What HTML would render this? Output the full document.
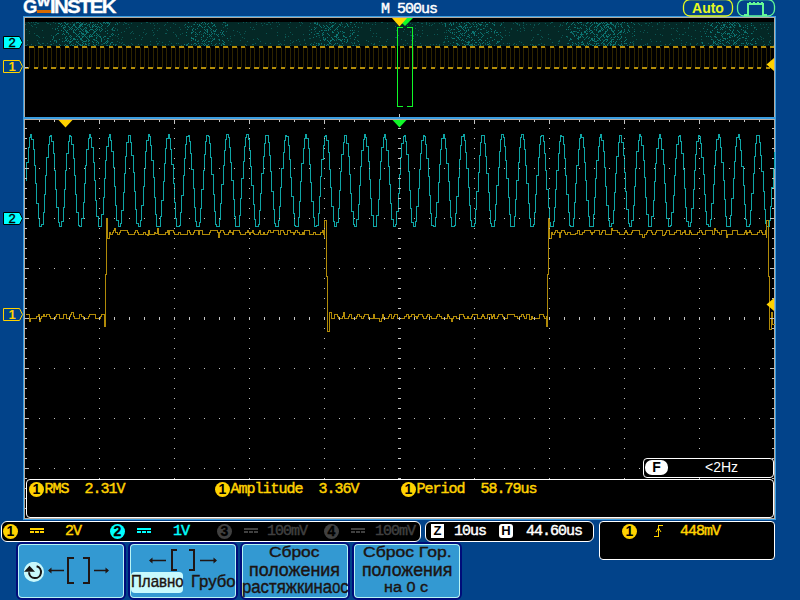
<!DOCTYPE html><html lang="ru"><head><meta charset="utf-8"><title>GW Instek oscilloscope</title><style>
*{margin:0;padding:0;box-sizing:border-box}
html,body{width:800px;height:600px;overflow:hidden;background:#02438a}
body{position:relative;font-family:"Liberation Sans",sans-serif}
.scope{position:absolute;left:0;top:0}
.a{position:absolute;white-space:nowrap}
.m{font-family:"Liberation Mono",monospace;font-weight:normal;-webkit-text-stroke:0.45px;font-size:15px;letter-spacing:-1px;line-height:14px;height:14px;margin-top:2px}
.logo{left:0;top:-3px;height:20px;line-height:20px;font-size:18.5px;font-weight:bold;color:#fff;width:130px;-webkit-text-stroke:0.3px #fff}
.logo span{position:absolute;top:0}
.logo .g{left:23px}
.logo .w{left:36.5px;font-size:12.5px;top:-5px;transform:scaleX(1.12);transform-origin:0 0;-webkit-text-stroke:0.4px #fff}
.logo .r{left:49.5px;letter-spacing:-1.55px;transform:scaleX(1.105);transform-origin:0 0}
.logo .bar{left:37px;top:13px;width:14px;height:3px;background:#d86a00}
.pill{top:0;height:17px;border-radius:9px;border:1px solid}
.tagn{width:16px;text-align:center;font-weight:bold;font-size:13px;line-height:13px;height:13px}
.m2{margin-top:1px;margin-left:-1px}
.thin{font-weight:normal;-webkit-text-stroke:0.35px}
.circ{width:15px;height:15px;border-radius:50%;text-align:center;font-weight:bold;font-size:14px;line-height:15px;color:#000}
.box{border:1px solid #fff;background:#000}
.btn{top:542px;height:58px;border:2px solid #000c7a;border-radius:6px;background:#b8f4f4;padding:1px}
.btn>i{display:block;width:100%;height:100%;background:#3399d2;border-radius:3px}
.bt2{color:#1c1412;transform-origin:0 0;-webkit-text-stroke:0.4px #1c1412}
</style></head><body>
<svg class="scope" width="800" height="600" viewBox="0 0 800 600" shape-rendering="crispEdges">
<rect x="23" y="16" width="753" height="504" fill="#3a9de0"/>
<rect x="24" y="17" width="751" height="502" fill="#b4aca4"/>
<rect x="25" y="18" width="749" height="500" fill="#000"/>
<rect x="23" y="117" width="753" height="2" fill="#3a9de0"/>
<rect x="24" y="119" width="751" height="1" fill="#b4aca4"/>
<rect x="25" y="22" width="749" height="24" fill="#042826"/>
<path d="M28 22h1M31 22h1M33 22h1M35 22h1M36 22h1M46 22h1M53 22h1M65 22h1M72 22h1M83 22h1M93 22h1M110 22h1M116 22h1M119 22h1M124 22h1M146 22h1M147 22h1M167 22h1M224 22h1M225 22h1M243 22h1M246 22h1M250 22h1M256 22h1M268 22h1M269 22h1M272 22h1M276 22h1M278 22h1M290 22h1M299 22h1M301 22h1M314 22h1M315 22h1M317 22h1M326 22h1M329 22h1M359 22h1M362 22h1M375 22h1M381 22h1M382 22h1M396 22h1M417 22h1M418 22h1M426 22h1M441 22h1M450 22h1M453 22h1M466 22h1M467 22h1M473 22h1M481 22h1M494 22h1M503 22h1M515 22h1M523 22h1M551 22h1M552 22h1M563 22h1M579 22h1M588 22h1M605 22h1M651 22h1M659 22h1M664 22h1M681 22h1M689 22h1M693 22h1M725 22h1M732 22h1M735 22h1M737 22h1M29 23h1M37 23h1M38 23h1M47 23h1M48 23h1M55 23h1M67 23h1M68 23h1M74 23h1M76 23h1M81 23h1M90 23h1M103 23h1M108 23h1M125 23h1M126 23h1M131 23h1M141 23h1M150 23h1M153 23h1M157 23h1M173 23h1M211 23h1M225 23h1M238 23h1M261 23h1M264 23h1M302 23h1M310 23h1M331 23h1M341 23h1M362 23h1M366 23h1M368 23h1M387 23h1M402 23h1M404 23h1M410 23h1M421 23h1M422 23h1M426 23h1M429 23h1M434 23h1M439 23h1M444 23h1M459 23h1M472 23h1M501 23h1M513 23h1M516 23h1M517 23h1M523 23h1M539 23h1M545 23h1M550 23h1M587 23h1M616 23h1M618 23h1M621 23h1M633 23h1M638 23h1M645 23h1M646 23h1M649 23h1M657 23h1M689 23h1M698 23h1M700 23h1M736 23h1M25 24h1M34 24h1M35 24h1M50 24h1M70 24h1M88 24h1M117 24h1M123 24h1M128 24h1M165 24h1M175 24h1M193 24h1M203 24h1M205 24h1M222 24h1M256 24h1M266 24h1M267 24h1M270 24h1M279 24h1M288 24h1M316 24h1M319 24h1M329 24h1M334 24h1M340 24h1M342 24h1M350 24h1M372 24h1M375 24h1M398 24h1M400 24h1M412 24h1M426 24h1M432 24h1M442 24h1M470 24h1M493 24h1M517 24h1M519 24h1M526 24h1M530 24h1M534 24h1M538 24h1M560 24h1M566 24h1M583 24h1M609 24h1M611 24h1M613 24h1M616 24h1M618 24h1M621 24h1M639 24h1M657 24h1M669 24h1M676 24h1M708 24h1M725 24h1M734 24h1M747 24h1M760 24h1M763 24h1M766 24h1M770 24h1M31 25h1M89 25h1M154 25h1M164 25h1M184 25h1M226 25h1M262 25h1M300 25h1M407 25h1M415 25h1M429 25h1M431 25h1M460 25h1M477 25h1M483 25h1M485 25h1M519 25h1M523 25h1M534 25h1M547 25h1M560 25h1M562 25h1M575 25h1M583 25h1M621 25h1M628 25h1M641 25h1M648 25h1M664 25h1M693 25h1M735 25h1M740 25h1M753 25h1M32 26h1M137 26h1M189 26h1M225 26h1M277 26h1M309 26h1M342 26h1M395 26h1M422 26h1M458 26h1M487 26h1M554 26h1M559 26h1M614 26h1M652 26h1M704 26h1M36 27h1M65 27h1M75 27h1M86 27h1M100 27h1M129 27h1M170 27h1M179 27h1M185 27h1M223 27h1M250 27h1M253 27h1M289 27h1M296 27h1M316 27h1M323 27h1M332 27h1M361 27h1M469 27h1M476 27h1M504 27h1M523 27h1M533 27h1M577 27h1M589 27h1M632 27h1M688 27h1M731 27h1M745 27h1M755 27h1M764 27h1M768 27h1M52 28h1M55 28h1M105 28h1M115 28h1M126 28h1M154 28h1M159 28h1M227 28h1M271 28h1M326 28h1M370 28h1M387 28h1M415 28h1M484 28h1M511 28h1M520 28h1M524 28h1M578 28h1M579 28h1M597 28h1M601 28h1M605 28h1M615 28h1M663 28h1M671 28h1M673 28h1M677 28h1M684 28h1M688 28h1M725 28h1M754 28h1M761 28h1M26 29h1M85 29h1M111 29h1M117 29h1M144 29h1M166 29h1M180 29h1M206 29h1M252 29h1M254 29h1M404 29h1M437 29h1M453 29h1M511 29h1M570 29h1M628 29h1M634 29h1M657 29h1M733 29h1M767 29h1M42 30h1M99 30h1M112 30h1M113 30h1M117 30h1M152 30h1M157 30h1M167 30h1M210 30h1M233 30h1M309 30h1M322 30h1M325 30h1M354 30h1M370 30h1M396 30h1M418 30h1M422 30h1M446 30h1M450 30h1M486 30h1M505 30h1M517 30h1M524 30h1M531 30h1M540 30h1M612 30h1M624 30h1M644 30h1M676 30h1M695 30h1M745 30h1M29 31h1M83 31h1M124 31h1M132 31h1M206 31h1M211 31h1M213 31h1M226 31h1M237 31h1M245 31h1M315 31h1M337 31h1M358 31h1M403 31h1M410 31h1M449 31h1M520 31h1M558 31h1M575 31h1M576 31h1M587 31h1M640 31h1M677 31h1M700 31h1M704 31h1M706 31h1M744 31h1M753 31h1M93 32h1M121 32h1M131 32h1M143 32h1M153 32h1M173 32h1M239 32h1M277 32h1M290 32h1M354 32h1M410 32h1M444 32h1M446 32h1M454 32h1M509 32h1M572 32h1M621 32h1M643 32h1M647 32h1M685 32h1M29 33h1M34 33h1M130 33h1M133 33h1M146 33h1M165 33h1M166 33h1M182 33h1M196 33h1M203 33h1M244 33h1M266 33h1M316 33h1M342 33h1M350 33h1M373 33h1M376 33h1M422 33h1M484 33h1M488 33h1M494 33h1M573 33h1M625 33h1M632 33h1M752 33h1M768 33h1M68 34h1M84 34h1M99 34h1M145 34h1M154 34h1M175 34h1M180 34h1M199 34h1M201 34h1M214 34h1M240 34h1M285 34h1M292 34h1M303 34h1M322 34h1M407 34h1M415 34h1M417 34h1M434 34h1M437 34h1M537 34h1M538 34h1M548 34h1M576 34h1M583 34h1M597 34h1M601 34h1M655 34h1M660 34h1M671 34h1M679 34h1M682 34h1M683 34h1M729 34h1M741 34h1M36 35h1M37 35h1M51 35h1M55 35h1M81 35h1M115 35h1M139 35h1M153 35h1M176 35h1M234 35h1M277 35h1M318 35h1M319 35h1M358 35h1M398 35h1M410 35h1M411 35h1M413 35h1M417 35h1M427 35h1M500 35h1M505 35h1M509 35h1M562 35h1M662 35h1M688 35h1M731 35h1M38 36h1M87 36h1M97 36h1M109 36h1M117 36h1M176 36h1M196 36h1M222 36h1M230 36h1M285 36h1M288 36h1M350 36h1M372 36h1M376 36h1M413 36h1M420 36h1M445 36h1M501 36h1M541 36h1M567 36h1M632 36h1M691 36h1M738 36h1M746 36h1M760 36h1M770 36h1M39 37h1M43 37h1M122 37h1M142 37h1M242 37h1M285 37h1M319 37h1M380 37h1M395 37h1M396 37h1M451 37h1M491 37h1M533 37h1M542 37h1M561 37h1M567 37h1M613 37h1M711 37h1M715 37h1M722 37h1M761 37h1M53 38h1M62 38h1M71 38h1M118 38h1M135 38h1M157 38h1M178 38h1M210 38h1M212 38h1M230 38h1M244 38h1M257 38h1M309 38h1M310 38h1M323 38h1M337 38h1M350 38h1M413 38h1M447 38h1M548 38h1M585 38h1M610 38h1M676 38h1M679 38h1M695 38h1M740 38h1M757 38h1M763 38h1M104 39h1M112 39h1M121 39h1M131 39h1M141 39h1M218 39h1M253 39h1M258 39h1M298 39h1M304 39h1M324 39h1M336 39h1M340 39h1M387 39h1M401 39h1M532 39h1M540 39h1M550 39h1M602 39h1M611 39h1M636 39h1M641 39h1M650 39h1M672 39h1M691 39h1M701 39h1M712 39h1M758 39h1M761 39h1M27 40h1M37 40h1M55 40h1M56 40h1M81 40h1M88 40h1M94 40h1M95 40h1M198 40h1M228 40h1M240 40h1M284 40h1M290 40h1M296 40h1M304 40h1M336 40h1M357 40h1M366 40h1M405 40h1M411 40h1M531 40h1M559 40h1M594 40h1M598 40h1M603 40h1M673 40h1M681 40h1M713 40h1M731 40h1M739 40h1M747 40h1M770 40h1M54 41h1M86 41h1M107 41h1M108 41h1M117 41h1M150 41h1M156 41h1M159 41h1M169 41h1M198 41h1M231 41h1M247 41h1M260 41h1M278 41h1M293 41h1M299 41h1M341 41h1M368 41h1M379 41h1M386 41h1M415 41h1M444 41h1M469 41h1M498 41h1M519 41h1M558 41h1M559 41h1M633 41h1M651 41h1M656 41h1M660 41h1M733 41h1M763 41h1M769 41h1M38 42h1M69 42h1M76 42h1M119 42h1M122 42h1M162 42h1M206 42h1M292 42h1M314 42h1M351 42h1M354 42h1M443 42h1M444 42h1M466 42h1M498 42h1M521 42h1M552 42h1M587 42h1M632 42h1M686 42h1M701 42h1M769 42h1M38 43h1M39 43h1M42 43h1M43 43h1M47 43h1M53 43h1M73 43h1M88 43h1M103 43h1M121 43h1M131 43h1M157 43h1M158 43h1M171 43h1M176 43h1M178 43h1M201 43h1M202 43h1M216 43h1M222 43h1M255 43h1M265 43h1M270 43h1M280 43h1M290 43h1M305 43h1M311 43h1M319 43h1M352 43h1M371 43h1M374 43h1M407 43h1M420 43h1M450 43h1M472 43h1M480 43h1M485 43h1M503 43h1M507 43h1M509 43h1M514 43h1M541 43h1M558 43h1M567 43h1M573 43h1M579 43h1M597 43h1M604 43h1M621 43h1M625 43h1M633 43h1M647 43h1M670 43h1M681 43h1M690 43h1M697 43h1M708 43h1M717 43h1M719 43h1M733 43h1M742 43h1M756 43h1M770 43h1M27 44h1M31 44h1M40 44h1M50 44h1M88 44h1M101 44h1M102 44h1M115 44h1M116 44h1M123 44h1M124 44h1M132 44h1M138 44h1M141 44h1M150 44h1M157 44h1M165 44h1M168 44h1M186 44h1M193 44h1M221 44h1M230 44h1M245 44h1M252 44h1M253 44h1M278 44h1M279 44h1M281 44h1M284 44h1M300 44h1M318 44h1M321 44h1M328 44h1M331 44h1M339 44h1M373 44h1M374 44h1M403 44h1M411 44h1M430 44h1M433 44h1M436 44h1M439 44h1M443 44h1M466 44h1M470 44h1M472 44h1M480 44h1M485 44h1M490 44h1M513 44h1M516 44h1M523 44h1M530 44h1M532 44h1M538 44h1M539 44h1M544 44h1M578 44h1M591 44h1M603 44h1M615 44h1M629 44h1M633 44h1M645 44h1M647 44h1M665 44h1M669 44h1M685 44h1M690 44h1M696 44h1M712 44h1M717 44h1M718 44h1M735 44h1M764 44h1M768 44h1M25 45h1M26 45h1M35 45h1M45 45h1M56 45h1M84 45h1M89 45h1M95 45h1M98 45h1M106 45h1M125 45h1M128 45h1M147 45h1M162 45h1M173 45h1M181 45h1M187 45h1M195 45h1M201 45h1M212 45h1M214 45h1M246 45h1M290 45h1M311 45h1M324 45h1M328 45h1M340 45h1M341 45h1M343 45h1M352 45h1M355 45h1M356 45h1M367 45h1M379 45h1M381 45h1M382 45h1M385 45h1M393 45h1M405 45h1M415 45h1M421 45h1M425 45h1M439 45h1M448 45h1M457 45h1M470 45h1M471 45h1M475 45h1M476 45h1M483 45h1M489 45h1M494 45h1M509 45h1M533 45h1M535 45h1M555 45h1M572 45h1M603 45h1M612 45h1M633 45h1M640 45h1M643 45h1M660 45h1M661 45h1M681 45h1M718 45h1M725 45h1M741 45h1M763 45h1M773 45h1" stroke="#0a5552" stroke-width="1" fill="none" transform="translate(0,0.5)"/>
<path d="M64 22h1M76 22h1M77 22h1M78 22h1M80 22h1M90 22h1M92 22h1M98 22h1M103 22h1M104 22h1M106 22h1M107 22h1M108 22h1M188 22h1M195 22h1M202 22h1M204 22h1M211 22h1M223 22h1M330 22h1M332 22h1M333 22h1M341 22h1M350 22h1M351 22h1M356 22h1M456 22h1M461 22h1M468 22h1M475 22h1M482 22h1M485 22h1M489 22h1M567 22h1M573 22h1M577 22h1M580 22h1M581 22h1M587 22h1M591 22h1M594 22h1M596 22h1M601 22h1M603 22h1M606 22h1M610 22h1M611 22h1M617 22h1M622 22h1M624 22h1M631 22h1M708 22h1M716 22h1M718 22h1M722 22h1M727 22h1M729 22h1M734 22h1M58 23h1M59 23h1M61 23h1M65 23h1M79 23h1M82 23h1M86 23h1M100 23h1M105 23h1M107 23h1M109 23h1M117 23h1M201 23h1M205 23h1M208 23h1M212 23h1M314 23h1M315 23h1M317 23h1M335 23h1M346 23h1M445 23h1M450 23h1M453 23h1M464 23h1M469 23h1M478 23h1M492 23h1M566 23h1M572 23h1M578 23h1M586 23h1M590 23h1M594 23h1M596 23h1M597 23h1M599 23h1M600 23h1M602 23h1M604 23h1M607 23h1M610 23h1M611 23h1M627 23h1M705 23h1M712 23h1M719 23h1M730 23h1M733 23h1M738 23h1M751 23h1M60 24h1M66 24h1M67 24h1M73 24h1M74 24h1M80 24h1M81 24h1M82 24h1M84 24h1M85 24h1M89 24h1M93 24h1M95 24h1M97 24h1M101 24h1M109 24h1M115 24h1M185 24h1M194 24h1M197 24h1M199 24h1M207 24h1M214 24h1M227 24h1M317 24h1M339 24h1M347 24h1M354 24h1M445 24h1M449 24h1M451 24h1M453 24h1M459 24h1M466 24h1M473 24h1M476 24h1M479 24h1M480 24h1M481 24h1M486 24h1M487 24h1M494 24h1M501 24h1M571 24h1M574 24h1M581 24h1M592 24h1M598 24h1M599 24h1M606 24h1M607 24h1M608 24h1M612 24h1M620 24h1M634 24h1M711 24h1M723 24h1M724 24h1M729 24h1M731 24h1M732 24h1M739 24h1M62 25h1M64 25h1M73 25h1M74 25h1M79 25h1M80 25h1M81 25h1M87 25h1M92 25h1M94 25h1M102 25h1M108 25h1M199 25h1M200 25h1M213 25h1M214 25h1M225 25h1M227 25h1M319 25h1M323 25h1M326 25h1M332 25h1M333 25h1M340 25h1M347 25h1M445 25h1M451 25h1M465 25h1M466 25h1M480 25h1M494 25h1M500 25h1M585 25h1M591 25h1M597 25h1M598 25h1M603 25h1M605 25h1M606 25h1M613 25h1M615 25h1M627 25h1M710 25h1M711 25h1M717 25h1M721 25h1M723 25h1M724 25h1M732 25h1M734 25h1M739 25h1M745 25h1M751 25h1M58 26h1M61 26h1M65 26h1M68 26h1M72 26h1M75 26h1M79 26h1M80 26h1M82 26h1M89 26h1M92 26h1M93 26h1M95 26h1M96 26h1M98 26h1M101 26h1M107 26h1M187 26h1M191 26h1M198 26h1M201 26h1M205 26h1M208 26h1M212 26h1M215 26h1M320 26h1M324 26h1M327 26h1M331 26h1M332 26h1M338 26h1M345 26h1M348 26h1M355 26h1M445 26h1M459 26h1M460 26h1M461 26h1M464 26h1M471 26h1M474 26h1M476 26h1M485 26h1M569 26h1M586 26h1M590 26h1M595 26h1M597 26h1M600 26h1M604 26h1M607 26h1M608 26h1M615 26h1M618 26h1M621 26h1M628 26h1M712 26h1M716 26h1M724 26h1M726 26h1M730 26h1M733 26h1M739 26h1M740 26h1M747 26h1M63 27h1M64 27h1M69 27h1M71 27h1M76 27h1M78 27h1M79 27h1M85 27h1M90 27h1M92 27h1M97 27h1M99 27h1M113 27h1M188 27h1M202 27h1M204 27h1M209 27h1M314 27h1M321 27h1M328 27h1M330 27h1M337 27h1M344 27h1M352 27h1M358 27h1M456 27h1M461 27h1M463 27h1M465 27h1M467 27h1M470 27h1M568 27h1M574 27h1M575 27h1M580 27h1M594 27h1M596 27h1M601 27h1M604 27h1M606 27h1M608 27h1M610 27h1M615 27h1M622 27h1M629 27h1M715 27h1M716 27h1M720 27h1M722 27h1M723 27h1M727 27h1M729 27h1M730 27h1M734 27h1M743 27h1M754 27h1M57 28h1M63 28h1M70 28h1M72 28h1M77 28h1M80 28h1M84 28h1M86 28h1M96 28h1M101 28h1M112 28h1M193 28h1M197 28h1M210 28h1M315 28h1M325 28h1M329 28h1M336 28h1M449 28h1M457 28h1M462 28h1M465 28h1M478 28h1M483 28h1M490 28h1M577 28h1M581 28h1M586 28h1M589 28h1M602 28h1M609 28h1M610 28h1M611 28h1M703 28h1M714 28h1M721 28h1M747 28h1M55 29h1M64 29h1M69 29h1M71 29h1M74 29h1M76 29h1M78 29h1M81 29h1M83 29h1M90 29h1M91 29h1M92 29h1M95 29h1M97 29h1M99 29h1M102 29h1M112 29h1M187 29h1M192 29h1M195 29h1M204 29h1M207 29h1M211 29h1M216 29h1M311 29h1M314 29h1M328 29h1M330 29h1M335 29h1M337 29h1M451 29h1M454 29h1M458 29h1M463 29h1M468 29h1M477 29h1M480 29h1M481 29h1M491 29h1M566 29h1M568 29h1M587 29h1M589 29h1M594 29h1M596 29h1M601 29h1M603 29h1M607 29h1M611 29h1M624 29h1M707 29h1M717 29h1M720 29h1M722 29h1M729 29h1M741 29h1M756 29h1M58 30h1M61 30h1M65 30h1M67 30h1M73 30h1M75 30h1M82 30h1M85 30h1M86 30h1M89 30h1M93 30h1M96 30h1M101 30h1M107 30h1M114 30h1M192 30h1M205 30h1M207 30h1M213 30h1M215 30h1M221 30h1M321 30h1M324 30h1M326 30h1M328 30h1M334 30h1M350 30h1M352 30h1M448 30h1M460 30h1M464 30h1M466 30h1M468 30h1M495 30h1M579 30h1M586 30h1M590 30h1M591 30h1M596 30h1M599 30h1M600 30h1M602 30h1M607 30h1M611 30h1M614 30h1M618 30h1M621 30h1M628 30h1M712 30h1M730 30h1M733 30h1M737 30h1M743 30h1M63 31h1M66 31h1M73 31h1M79 31h1M80 31h1M85 31h1M86 31h1M87 31h1M94 31h1M95 31h1M100 31h1M105 31h1M193 31h1M200 31h1M207 31h1M214 31h1M215 31h1M223 31h1M319 31h1M332 31h1M340 31h1M342 31h1M458 31h1M459 31h1M466 31h1M472 31h1M473 31h1M475 31h1M488 31h1M491 31h1M494 31h1M571 31h1M573 31h1M574 31h1M584 31h1M585 31h1M589 31h1M592 31h1M598 31h1M599 31h1M600 31h1M605 31h1M606 31h1M612 31h1M613 31h1M620 31h1M621 31h1M624 31h1M629 31h1M634 31h1M710 31h1M717 31h1M725 31h1M732 31h1M738 31h1M745 31h1M66 32h1M67 32h1M73 32h1M74 32h1M81 32h1M86 32h1M87 32h1M88 32h1M94 32h1M186 32h1M191 32h1M192 32h1M195 32h1M199 32h1M204 32h1M207 32h1M211 32h1M220 32h1M222 32h1M311 32h1M323 32h1M332 32h1M333 32h1M338 32h1M343 32h1M344 32h1M353 32h1M450 32h1M452 32h1M456 32h1M465 32h1M472 32h1M473 32h1M474 32h1M480 32h1M486 32h1M487 32h1M494 32h1M496 32h1M497 32h1M500 32h1M570 32h1M571 32h1M577 32h1M578 32h1M581 32h1M584 32h1M585 32h1M591 32h1M592 32h1M598 32h1M605 32h1M613 32h1M619 32h1M620 32h1M623 32h1M627 32h1M710 32h1M711 32h1M717 32h1M718 32h1M719 32h1M724 32h1M732 32h1M739 32h1M744 32h1M745 32h1M746 32h1M57 33h1M58 33h1M63 33h1M68 33h1M75 33h1M79 33h1M81 33h1M82 33h1M83 33h1M86 33h1M93 33h1M96 33h1M107 33h1M112 33h1M191 33h1M205 33h1M212 33h1M214 33h1M222 33h1M317 33h1M318 33h1M322 33h1M327 33h1M338 33h1M352 33h1M452 33h1M460 33h1M462 33h1M464 33h1M471 33h1M473 33h1M474 33h1M478 33h1M481 33h1M572 33h1M581 33h1M586 33h1M587 33h1M590 33h1M593 33h1M604 33h1M605 33h1M614 33h1M618 33h1M705 33h1M721 33h1M723 33h1M725 33h1M727 33h1M728 33h1M729 33h1M731 33h1M733 33h1M747 33h1M751 33h1M56 34h1M62 34h1M64 34h1M76 34h1M78 34h1M82 34h1M83 34h1M85 34h1M90 34h1M92 34h1M97 34h1M111 34h1M113 34h1M118 34h1M195 34h1M197 34h1M207 34h1M209 34h1M211 34h1M216 34h1M218 34h1M221 34h1M223 34h1M309 34h1M314 34h1M323 34h1M328 34h1M336 34h1M337 34h1M352 34h1M454 34h1M461 34h1M468 34h1M474 34h1M482 34h1M498 34h1M573 34h1M580 34h1M581 34h1M582 34h1M586 34h1M594 34h1M596 34h1M603 34h1M608 34h1M610 34h1M613 34h1M614 34h1M617 34h1M620 34h1M715 34h1M722 34h1M727 34h1M734 34h1M736 34h1M743 34h1M70 35h1M77 35h1M84 35h1M89 35h1M91 35h1M94 35h1M96 35h1M98 35h1M112 35h1M186 35h1M203 35h1M210 35h1M217 35h1M224 35h1M322 35h1M329 35h1M336 35h1M337 35h1M343 35h1M350 35h1M357 35h1M459 35h1M462 35h1M464 35h1M469 35h1M474 35h1M476 35h1M483 35h1M496 35h1M574 35h1M576 35h1M581 35h1M597 35h1M602 35h1M603 35h1M606 35h1M609 35h1M634 35h1M721 35h1M730 35h1M734 35h1M735 35h1M739 35h1M53 36h1M66 36h1M69 36h1M71 36h1M76 36h1M78 36h1M79 36h1M82 36h1M83 36h1M85 36h1M89 36h1M90 36h1M91 36h1M92 36h1M99 36h1M100 36h1M104 36h1M105 36h1M110 36h1M195 36h1M203 36h1M209 36h1M211 36h1M218 36h1M316 36h1M334 36h1M335 36h1M336 36h1M343 36h1M344 36h1M349 36h1M447 36h1M456 36h1M467 36h1M468 36h1M482 36h1M566 36h1M574 36h1M578 36h1M580 36h1M582 36h1M587 36h1M594 36h1M596 36h1M601 36h1M603 36h1M606 36h1M607 36h1M608 36h1M615 36h1M617 36h1M621 36h1M701 36h1M706 36h1M708 36h1M710 36h1M714 36h1M715 36h1M722 36h1M729 36h1M732 36h1M734 36h1M748 36h1M53 37h1M65 37h1M70 37h1M79 37h1M82 37h1M86 37h1M89 37h1M96 37h1M100 37h1M103 37h1M191 37h1M201 37h1M207 37h1M313 37h1M323 37h1M327 37h1M331 37h1M336 37h1M338 37h1M345 37h1M346 37h1M355 37h1M457 37h1M458 37h1M460 37h1M469 37h1M471 37h1M478 37h1M481 37h1M490 37h1M502 37h1M578 37h1M579 37h1M580 37h1M583 37h1M586 37h1M589 37h1M597 37h1M600 37h1M604 37h1M607 37h1M611 37h1M614 37h1M618 37h1M621 37h1M625 37h1M716 37h1M729 37h1M730 37h1M737 37h1M742 37h1M743 37h1M65 38h1M67 38h1M73 38h1M74 38h1M80 38h1M81 38h1M87 38h1M96 38h1M101 38h1M107 38h1M108 38h1M191 38h1M192 38h1M193 38h1M214 38h1M227 38h1M325 38h1M332 38h1M445 38h1M452 38h1M453 38h1M454 38h1M458 38h1M466 38h1M487 38h1M570 38h1M577 38h1M578 38h1M588 38h1M591 38h1M592 38h1M594 38h1M598 38h1M599 38h1M620 38h1M723 38h1M724 38h1M725 38h1M727 38h1M739 38h1M745 38h1M746 38h1M753 38h1M52 39h1M59 39h1M66 39h1M70 39h1M73 39h1M74 39h1M75 39h1M77 39h1M80 39h1M81 39h1M88 39h1M93 39h1M94 39h1M101 39h1M193 39h1M195 39h1M201 39h1M206 39h1M213 39h1M214 39h1M219 39h1M323 39h1M325 39h1M332 39h1M333 39h1M338 39h1M339 39h1M342 39h1M344 39h1M347 39h1M354 39h1M459 39h1M462 39h1M472 39h1M479 39h1M480 39h1M494 39h1M501 39h1M570 39h1M571 39h1M578 39h1M584 39h1M591 39h1M592 39h1M594 39h1M599 39h1M605 39h1M606 39h1M607 39h1M612 39h1M613 39h1M617 39h1M619 39h1M626 39h1M711 39h1M717 39h1M720 39h1M725 39h1M738 39h1M752 39h1M54 40h1M65 40h1M66 40h1M68 40h1M72 40h1M82 40h1M86 40h1M89 40h1M96 40h1M101 40h1M107 40h1M191 40h1M195 40h1M203 40h1M205 40h1M212 40h1M219 40h1M222 40h1M320 40h1M324 40h1M327 40h1M330 40h1M331 40h1M334 40h1M340 40h1M341 40h1M347 40h1M456 40h1M461 40h1M463 40h1M471 40h1M474 40h1M478 40h1M481 40h1M485 40h1M492 40h1M569 40h1M590 40h1M592 40h1M593 40h1M597 40h1M600 40h1M604 40h1M607 40h1M611 40h1M625 40h1M718 40h1M719 40h1M722 40h1M723 40h1M729 40h1M733 40h1M737 40h1M745 40h1M751 40h1M50 41h1M56 41h1M62 41h1M64 41h1M67 41h1M69 41h1M70 41h1M71 41h1M76 41h1M78 41h1M83 41h1M84 41h1M85 41h1M88 41h1M92 41h1M97 41h1M101 41h1M106 41h1M197 41h1M202 41h1M204 41h1M208 41h1M209 41h1M211 41h1M223 41h1M328 41h1M330 41h1M344 41h1M347 41h1M358 41h1M448 41h1M465 41h1M468 41h1M489 41h1M497 41h1M499 41h1M582 41h1M589 41h1M594 41h1M595 41h1M596 41h1M603 41h1M606 41h1M610 41h1M611 41h1M613 41h1M616 41h1M621 41h1M624 41h1M713 41h1M715 41h1M720 41h1M727 41h1M736 41h1M755 41h1M56 42h1M70 42h1M77 42h1M82 42h1M93 42h1M96 42h1M98 42h1M105 42h1M107 42h1M111 42h1M112 42h1M224 42h1M329 42h1M346 42h1M453 42h1M467 42h1M468 42h1M469 42h1M475 42h1M476 42h1M479 42h1M483 42h1M487 42h1M497 42h1M572 42h1M578 42h1M581 42h1M582 42h1M602 42h1M609 42h1M611 42h1M615 42h1M630 42h1M702 42h1M713 42h1M714 42h1M718 42h1M726 42h1M728 42h1M734 42h1M735 42h1M746 42h1M69 43h1M78 43h1M83 43h1M85 43h1M89 43h1M98 43h1M104 43h1M106 43h1M110 43h1M188 43h1M194 43h1M195 43h1M198 43h1M204 43h1M211 43h1M219 43h1M223 43h1M316 43h1M318 43h1M321 43h1M329 43h1M330 43h1M335 43h1M337 43h1M342 43h1M354 43h1M456 43h1M457 43h1M462 43h1M468 43h1M482 43h1M489 43h1M496 43h1M568 43h1M575 43h1M583 43h1M587 43h1M589 43h1M594 43h1M596 43h1M598 43h1M601 43h1M603 43h1M608 43h1M610 43h1M615 43h1M624 43h1M626 43h1M702 43h1M713 43h1M715 43h1M720 43h1M722 43h1M729 43h1M734 43h1M736 43h1M741 43h1M743 43h1M746 43h1M748 43h1M750 43h1M755 43h1M51 44h1M59 44h1M65 44h1M71 44h1M75 44h1M79 44h1M80 44h1M82 44h1M85 44h1M86 44h1M93 44h1M96 44h1M110 44h1M113 44h1M184 44h1M187 44h1M191 44h1M196 44h1M203 44h1M205 44h1M208 44h1M215 44h1M223 44h1M224 44h1M310 44h1M313 44h1M319 44h1M324 44h1M327 44h1M334 44h1M359 44h1M457 44h1M458 44h1M464 44h1M467 44h1M468 44h1M471 44h1M474 44h1M478 44h1M487 44h1M488 44h1M572 44h1M576 44h1M581 44h1M582 44h1M583 44h1M588 44h1M590 44h1M596 44h1M604 44h1M607 44h1M610 44h1M611 44h1M613 44h1M614 44h1M618 44h1M621 44h1M716 44h1M723 44h1M733 44h1M747 44h1M751 44h1M752 44h1M60 45h1M64 45h1M66 45h1M67 45h1M70 45h1M72 45h1M73 45h1M77 45h1M80 45h1M81 45h1M82 45h1M88 45h1M94 45h1M107 45h1M109 45h1M115 45h1M186 45h1M199 45h1M204 45h1M206 45h1M207 45h1M221 45h1M316 45h1M318 45h1M326 45h1M333 45h1M339 45h1M353 45h1M452 45h1M459 45h1M465 45h1M469 45h1M472 45h1M480 45h1M500 45h1M570 45h1M578 45h1M584 45h1M586 45h1M592 45h1M593 45h1M595 45h1M598 45h1M599 45h1M605 45h1M607 45h1M610 45h1M613 45h1M619 45h1M620 45h1M622 45h1M627 45h1M703 45h1M704 45h1M710 45h1M711 45h1M713 45h1M724 45h1M731 45h1M739 45h1M745 45h1" stroke="#0c7471" stroke-width="1" fill="none" transform="translate(0,0.5)"/>
<path d="M29.5 47V68M34.5 47V68M38.5 47V68M43.5 47V68M47.5 47V68M51.5 47V68M56.5 47V68M60.5 47V68M65.5 47V68M69.5 47V68M74.5 47V68M78.5 47V68M82.5 47V68M87.5 47V68M91.5 47V68M96.5 47V68M100.5 47V68M104.5 47V68M109.5 47V68M113.5 47V68M118.5 47V68M122.5 47V68M126.5 47V68M131.5 47V68M135.5 47V68M140.5 47V68M144.5 47V68M148.5 47V68M153.5 47V68M157.5 47V68M162.5 47V68M166.5 47V68M171.5 47V68M175.5 47V68M179.5 47V68M184.5 47V68M188.5 47V68M193.5 47V68M197.5 47V68M201.5 47V68M206.5 47V68M210.5 47V68M215.5 47V68M219.5 47V68M223.5 47V68M228.5 47V68M232.5 47V68M237.5 47V68M241.5 47V68M245.5 47V68M250.5 47V68M254.5 47V68M259.5 47V68M263.5 47V68M268.5 47V68M272.5 47V68M276.5 47V68M281.5 47V68M285.5 47V68M290.5 47V68M294.5 47V68M298.5 47V68M303.5 47V68M307.5 47V68M312.5 47V68M316.5 47V68M320.5 47V68M325.5 47V68M329.5 47V68M334.5 47V68M338.5 47V68M343.5 47V68M347.5 47V68M351.5 47V68M356.5 47V68M360.5 47V68M365.5 47V68M369.5 47V68M373.5 47V68M378.5 47V68M382.5 47V68M387.5 47V68M391.5 47V68M395.5 47V68M400.5 47V68M404.5 47V68M409.5 47V68M413.5 47V68M417.5 47V68M422.5 47V68M426.5 47V68M431.5 47V68M435.5 47V68M440.5 47V68M444.5 47V68M448.5 47V68M453.5 47V68M457.5 47V68M462.5 47V68M466.5 47V68M470.5 47V68M475.5 47V68M479.5 47V68M484.5 47V68M488.5 47V68M492.5 47V68M497.5 47V68M501.5 47V68M506.5 47V68M510.5 47V68M514.5 47V68M519.5 47V68M523.5 47V68M528.5 47V68M532.5 47V68M537.5 47V68M541.5 47V68M545.5 47V68M550.5 47V68M554.5 47V68M559.5 47V68M563.5 47V68M567.5 47V68M572.5 47V68M576.5 47V68M581.5 47V68M585.5 47V68M589.5 47V68M594.5 47V68M598.5 47V68M603.5 47V68M607.5 47V68M612.5 47V68M616.5 47V68M620.5 47V68M625.5 47V68M629.5 47V68M634.5 47V68M638.5 47V68M642.5 47V68M647.5 47V68M651.5 47V68M656.5 47V68M660.5 47V68M664.5 47V68M669.5 47V68M673.5 47V68M678.5 47V68M682.5 47V68M686.5 47V68M691.5 47V68M695.5 47V68M700.5 47V68M704.5 47V68M709.5 47V68M713.5 47V68M717.5 47V68M722.5 47V68M726.5 47V68M731.5 47V68M735.5 47V68M739.5 47V68M744.5 47V68M748.5 47V68M753.5 47V68M757.5 47V68M761.5 47V68M766.5 47V68M770.5 47V68" stroke="#2e2400" stroke-width="1" fill="none"/>
<path d="M29 47H34M38 47H43M47 47H51M56 47H60M65 47H69M74 47H78M82 47H87M91 47H96M100 47H104M109 47H113M118 47H122M126 47H131M135 47H140M144 47H148M153 47H157M162 47H166M171 47H175M179 47H184M188 47H193M197 47H201M206 47H210M215 47H219M223 47H228M232 47H237M241 47H245M250 47H254M259 47H263M268 47H272M276 47H281M285 47H290M294 47H298M303 47H307M312 47H316M320 47H325M329 47H334M338 47H343M347 47H351M356 47H360M365 47H369M373 47H378M382 47H387M391 47H395M400 47H404M409 47H413M417 47H422M426 47H431M435 47H440M444 47H448M453 47H457M462 47H466M470 47H475M479 47H484M488 47H492M497 47H501M506 47H510M514 47H519M523 47H528M532 47H537M541 47H545M550 47H554M559 47H563M567 47H572M576 47H581M585 47H589M594 47H598M603 47H607M612 47H616M620 47H625M629 47H634M638 47H642M647 47H651M656 47H660M664 47H669M673 47H678M682 47H686M691 47H695M700 47H704M709 47H713M717 47H722M726 47H731M735 47H739M744 47H748M753 47H757M761 47H766M770 47H774M25 68H29M34 68H38M43 68H47M51 68H56M60 68H65M69 68H74M78 68H82M87 68H91M96 68H100M104 68H109M113 68H118M122 68H126M131 68H135M140 68H144M148 68H153M157 68H162M166 68H171M175 68H179M184 68H188M193 68H197M201 68H206M210 68H215M219 68H223M228 68H232M237 68H241M245 68H250M254 68H259M263 68H268M272 68H276M281 68H285M290 68H294M298 68H303M307 68H312M316 68H320M325 68H329M334 68H338M343 68H347M351 68H356M360 68H365M369 68H373M378 68H382M387 68H391M395 68H400M404 68H409M413 68H417M422 68H426M431 68H435M440 68H444M448 68H453M457 68H462M466 68H470M475 68H479M484 68H488M492 68H497M501 68H506M510 68H514M519 68H523M528 68H532M537 68H541M545 68H550M554 68H559M563 68H567M572 68H576M581 68H585M589 68H594M598 68H603M607 68H612M616 68H620M625 68H629M634 68H638M642 68H647M651 68H656M660 68H664M669 68H673M678 68H682M686 68H691M695 68H700M704 68H709M713 68H717M722 68H726M731 68H735M739 68H744M748 68H753M757 68H761M766 68H770" stroke="#b48e08" stroke-width="2" fill="none"/>
<rect x="25" y="67" width="3" height="1" fill="#ccc"/>
<path d="M399 114v3" stroke="#c4c4c4" stroke-width="1" fill="none" transform="translate(0.5,0)"/>
<path d="M403 27.5H397.5V106.5H403M407 27.5H412.5V106.5H407" stroke="#10f828" stroke-width="1" fill="none"/>
<polygon points="397,18 413,18 405,26" fill="#10f828" shape-rendering="auto"/>
<polygon points="392,18 407,18 399.5,26.5" fill="#ffd200" shape-rendering="auto"/>
<polygon points="766.5,64.5 774,58 774,71" fill="#ffd200" shape-rendering="auto"/>
<path d="M25 179.5H26.25V162H27.5V147H28.75V137H30V134H31.25V138.5H32.5V149H33.75V165H35V183H36.25V202.5H37.5V218H38.75V226H40V226H41.25V224H42.5V211.5H43.75V194H45V174.5H46.25V157H47.5V143.5H48.75V135.5H50V134.5H51.25V140.5H52.5V153H53.75V170H55V188.5H56.25V207H57.5V221.5H58.75V226H60V226H61.25V221H62.5V207H63.75V188.5H65V169.5H66.25V153H67.5V140.5H68.75V134.5H70V135.5H71.25V143.5H72.5V157.5H73.75V175H75V194H76.25V211.5H77.5V224.5H78.75V226H80V226H81.25V217.5H82.5V202H83.75V183H85V164.5H86.25V149H87.5V138H88.75V134H90V137H91.25V147H92.5V162H93.75V180H95V199.5H96.25V216H97.5V226H98.75V226H100V225.5H101.25V214H102.5V197H103.75V177.5H105V160H106.25V145.5H107.5V136.5H108.75V134H110V139.5H111.25V151H112.5V167H113.75V185.5H115V204.5H116.25V219.5H117.5V226H118.75V226H120V223H121.25V209.5H122.5V191.5H123.75V172.5H125V155.5H126.25V142H127.5V135H128.75V135H130V142H131.25V155H132.5V172H133.75V191H135V209H136.25V222.5H137.5V226H138.75V226H140V220H141.25V205H142.5V186H143.75V167.5H145V151H146.25V139.5H147.5V134H148.75V136H150V145H151.25V159.5H152.5V177H153.75V196.5H155V213.5H156.25V225.5H157.5V226H158.75V226H160V216H161.25V200H162.5V180.5H163.75V162.5H165V147.5H166.25V137.5H167.5V134H168.75V138H170V148.5H171.25V164H172.5V182.5H173.75V201.5H175V217.5H176.25V226H177.5V226H178.75V224.5H180V212H181.25V194.5H182.5V175H183.75V158H185V144H186.25V135.5H187.5V134.5H188.75V140.5H190V152.5H191.25V169H192.5V188H193.75V206.5H195V221H196.25V226H197.5V226H198.75V221.5H200V207.5H201.25V189H202.5V170H203.75V153.5H205V141H206.25V134.5H207.5V135.5H208.75V143H210V157H211.25V174H212.5V193.5H213.75V211H215V224H216.25V226H217.5V226H218.75V218.5H220V202.5H221.25V183.5H222.5V165H223.75V149.5H225V138.5H226.25V134H227.5V137H228.75V146.5H230V161.5H231.25V179.5H232.5V198.5H233.75V215.5H235V226H236.25V226H237.5V226H238.75V214.5H240V197.5H241.25V178H242.5V160.5H243.75V146H245V136.5H246.25V134H247.5V139H248.75V150H250V166H251.25V185H252.5V204H253.75V219H255V226H256.25V226H257.5V223.5H258.75V210H260V192.5H261.25V173H262.5V156H263.75V142.5H265V135H266.25V134.5H267.5V141.5H268.75V154.5H270V171H271.25V190.5H272.5V208.5H273.75V222.5H275V226H276.25V226H277.5V220H278.75V205.5H280V187H281.25V168H282.5V151.5H283.75V140H285V134.5H286.25V136H287.5V144.5H288.75V159H290V176.5H291.25V195.5H292.5V213H293.75V225H295V226H296.25V226H297.5V216.5H298.75V200.5H300V181H301.25V163H302.5V148H303.75V137.5H305V134H306.25V137.5H307.5V148H308.75V163.5H310V181.5H311.25V201H312.5V217H313.75V226H315V226H316.25V225H317.5V212.5H318.75V195.5H320V176H321.25V158.5H322.5V144.5H323.75V136H325V134.5H326.25V140H327.5V152H328.75V168.5H330V187H331.25V206H332.5V220.5H333.75V226H335V226H336.25V222H337.5V208H338.75V190H340V171H341.25V154H342.5V141.5H343.75V134.5H345V135H346.25V143H347.5V156H348.75V173.5H350V192.5H351.25V210.5H352.5V223.5H353.75V226H355V226H356.25V219H357.5V203.5H358.75V184.5H360V166H361.25V150H362.5V139H363.75V134H365V136.5H366.25V146H367.5V161H368.75V178.5H370V198H371.25V214.5H372.5V226H373.75V226H375V226H376.25V215H377.5V198.5H378.75V179H380V161H381.25V146.5H382.5V137H383.75V134H385V138.5H386.25V149.5H387.5V165.5H388.75V184H390V203H391.25V218.5H392.5V226H393.75V226H395V223.5H396.25V211H397.5V193H398.75V174H400V156.5H401.25V143H402.5V135.5H403.75V134.5H405V141H406.25V153.5H407.5V170.5H408.75V189.5H410V208H411.25V222H412.5V226H413.75V226H415V220.5H416.25V206H417.5V187.5H418.75V168.5H420V152.5H421.25V140H422.5V134.5H423.75V135.5H425V144H426.25V158H427.5V175.5H428.75V195H430V212.5H431.25V224.5H432.5V226H433.75V226H435V217H436.25V201.5H437.5V182H438.75V164H440V148.5H441.25V138H442.5V134H443.75V137.5H445V147.5H446.25V163H447.5V181H448.75V200H450V216.5H451.25V226H452.5V226H453.75V225H455V213H456.25V196H457.5V176.5H458.75V159H460V145H461.25V136H462.5V134H463.75V139.5H465V151.5H466.25V167.5H467.5V186.5H468.75V205H470V220H471.25V226H472.5V226H473.75V222.5H475V209H476.25V190.5H477.5V171.5H478.75V154.5H480V141.5H481.25V135H482.5V135H483.75V142.5H485V155.5H486.25V172.5H487.5V192H488.75V210H490V223H491.25V226H492.5V226H493.75V219.5H495V204H496.25V185H497.5V166.5H498.75V150.5H500V139H501.25V134H502.5V136.5H503.75V145.5H505V160H506.25V178H507.5V197H508.75V214H510V225.5H511.25V226H512.5V226H513.75V215.5H515V199H516.25V179.5H517.5V162H518.75V147H520V137H521.25V134H522.5V138.5H523.75V149H525V165H526.25V183H527.5V202.5H528.75V218H530V226H531.25V226H532.5V224H533.75V211.5H535V194H536.25V174.5H537.5V157H538.75V143.5H540V135.5H541.25V134.5H542.5V140.5H543.75V153H545V170H546.25V188.5H547.5V207H548.75V221.5H550V226H551.25V226H552.5V221H553.75V207H555V188.5H556.25V169.5H557.5V153H558.75V140.5H560V134.5H561.25V135.5H562.5V143.5H563.75V157.5H565V175H566.25V194H567.5V211.5H568.75V224.5H570V226H571.25V226H572.5V217.5H573.75V202H575V183H576.25V164.5H577.5V149H578.75V138H580V134H581.25V137H582.5V147H583.75V162H585V180H586.25V199.5H587.5V216H588.75V226H590V226H591.25V225.5H592.5V214H593.75V197H595V177.5H596.25V160H597.5V145.5H598.75V136.5H600V134H601.25V139.5H602.5V151H603.75V167H605V185.5H606.25V204.5H607.5V219.5H608.75V226H610V226H611.25V223H612.5V209.5H613.75V191.5H615V172.5H616.25V155.5H617.5V142H618.75V135H620V135H621.25V142H622.5V155H623.75V172H625V191H626.25V209H627.5V222.5H628.75V226H630V226H631.25V220H632.5V205H633.75V186H635V167.5H636.25V151H637.5V139.5H638.75V134H640V136H641.25V145H642.5V159.5H643.75V177H645V196.5H646.25V213.5H647.5V225.5H648.75V226H650V226H651.25V216H652.5V200H653.75V180.5H655V162.5H656.25V147.5H657.5V137.5H658.75V134H660V138H661.25V148.5H662.5V164H663.75V182.5H665V201.5H666.25V217.5H667.5V226H668.75V226H670V224.5H671.25V212H672.5V194.5H673.75V175H675V158H676.25V144H677.5V135.5H678.75V134.5H680V140.5H681.25V152.5H682.5V169H683.75V188H685V206.5H686.25V221H687.5V226H688.75V226H690V221.5H691.25V207.5H692.5V189H693.75V170H695V153.5H696.25V141H697.5V134.5H698.75V135.5H700V143H701.25V157H702.5V174H703.75V193.5H705V211H706.25V224H707.5V226H708.75V226H710V218.5H711.25V202.5H712.5V183.5H713.75V165H715V149.5H716.25V138.5H717.5V134H718.75V137H720V146.5H721.25V161.5H722.5V179.5H723.75V198.5H725V215.5H726.25V226H727.5V226H728.75V226H730V214.5H731.25V197.5H732.5V178H733.75V160.5H735V146H736.25V136.5H737.5V134H738.75V139H740V150H741.25V166H742.5V185H743.75V204H745V219H746.25V226H747.5V226H748.75V223.5H750V210H751.25V192.5H752.5V173H753.75V156H755V142.5H756.25V135H757.5V134.5H758.75V141.5H760V154.5H761.25V171H762.5V190.5H763.75V208.5H765V222.5H766.25V226H767.5V226H768.75V220H770V205.5H771.25V187H772.5V168H773.75V151.5H774" stroke="#0fa5a5" stroke-width="1" fill="none" transform="translate(0.5,0.5)"/>
<path d="M25 314H26.25V314H27.5V314H28.75V320.5H30V318H31.25V318H32.5V318H33.75V318H35V318H36.25V316H37.5V314H38.75V320.5H40V318H41.25V316H42.5V314H43.75V316H45V316H46.25V314H47.5V314H48.75V316H50V318H51.25V318H52.5V318H53.75V318H55V316H56.25V314H57.5V314H58.75V318H60V318H61.25V318H62.5V314H63.75V314H65V314H66.25V318H67.5V318H68.75V316H70V314H71.25V311.5H72.5V316H73.75V318H75V318H76.25V318H77.5V318H78.75V313.5H80V314H81.25V316H82.5V318H83.75V318H85V318H86.25V318H87.5V316H88.75V314H90V314H91.25V314H92.5V314H93.75V314H95V318H96.25V318H97.5V318H98.75V318H100V316H101.25V314H102.5V314H103.75V318H104V326H104.5V274H105.5V218H107V238H109V232H110.25V234H111.5V232H112.75V230H114V227.5H115.25V232H116.5V234H117.75V234H119V232H120.25V230H121.5V230H122.75V230H124V230H125.25V230H126.5V232H127.75V234H129V234H130.25V234H131.5V234H132.75V234H134V232H135.25V230H136.5V232H137.75V234H139V234H140.25V234H141.5V234H142.75V232H144V232H145.25V234H146.5V234.5H147.75V230H149V234H150.25V234H151.5V234H152.75V234H154V232H155.25V232.5H156.5V227.5H157.75V234H159V234H160.25V234H161.5V234H162.75V234H164V234H165.25V232H166.5V230H167.75V234H169V230H170.25V230H171.5V230H172.75V232H174V234H175.25V234H176.5V234H177.75V232H179V232H180.25V234H181.5V234H182.75V234H184V234H185.25V234H186.5V230H187.75V230H189V232H190.25V234H191.5V234H192.75V232H194V230H195.25V230H196.5V230H197.75V234H199V230H200.25V230H201.5V234H202.75V234H204V234H205.25V234H206.5V234H207.75V234H209V232H210.25V230H211.5V230H212.75V230H214V230H215.25V230H216.5V232H217.75V236.5H219V232H220.25V230H221.5V230H222.75V232H224V234H225.25V234H226.5V234H227.75V232H229V230H230.25V232H231.5V234H232.75V230H234V230H235.25V230H236.5V230H237.75V230H239V232H240.25V234H241.5V234H242.75V234H244V234H245.25V232H246.5V230H247.75V232H249V234H250.25V232H251.5V230H252.75V232.5H254V234H255.25V234H256.5V234H257.75V232H259V230H260.25V234H261.5V234H262.75V231.5H264V234H265.25V234H266.5V232H267.75V230H269V230H270.25V232H271.5V232H272.75V230H274V230H275.25V230H276.5V230H277.75V234H279V234H280.25V230H281.5V230H282.75V232H284V234H285.25V234H286.5V230H287.75V230H289V230H290.25V232H291.5V231.5H292.75V234H294V232H295.25V230H296.5V232H297.75V231.5H299V234H300.25V234H301.5V231.5H302.75V234H304V230H305.25V230H306.5V230H307.75V230H309V234H310.25V234H311.5V234H312.75V232H314V232H315.25V234H316.5V234H317.75V234H319V234H320.25V232H321.5V230H322.75V234H323.5V237H324V220H326V276H327V331H329V312H330.5V318H331.75V318H333V318H334.25V314H335.5V314H336.75V316H338V318H339.25V318H340.5V318H341.75V316H343V311.5H344.25V318H345.5V318H346.75V318H348V316H349.25V314H350.5V318H351.75V318H353V318H354.25V318H355.5V316H356.75V314H358V314H359.25V316H360.5V318H361.75V318H363V316H364.25V314H365.5V314H366.75V314H368V318H369.25V318H370.5V318H371.75V318H373V314H374.25V318H375.5V318H376.75V318H378V318H379.25V320.5H380.5V318H381.75V314H383V318H384.25V318H385.5V318H386.75V318H388V316H389.25V314H390.5V318H391.75V318H393V316H394.25V314H395.5V314H396.75V318H398V318H399.25V318H400.5V318H401.75V318H403V318H404.25V316H405.5V314H406.75V314H408V318H409.25V316H410.5V314H411.75V314H413V314H414.25V316H415.5V318H416.75V316H418V314H419.25V314H420.5V314H421.75V316H423V318H424.25V318H425.5V316H426.75V314H428V314H429.25V316H430.5V318H431.75V318H433V318H434.25V318H435.5V316H436.75V314H438V314H439.25V316H440.5V318H441.75V318H443V318H444.25V318H445.5V318H446.75V314H448V316H449.25V318H450.5V320.5H451.75V318H453V316H454.25V316H455.5V318H456.75V318H458V318H459.25V314H460.5V314H461.75V314H463V316H464.25V318H465.5V318H466.75V316H468V318H469.25V318H470.5V316H471.75V314H473V314H474.25V314H475.5V314H476.75V318H478V318H479.25V318H480.5V316H481.75V314H483V316H484.25V318H485.5V318H486.75V314H488V314H489.25V314H490.5V318H491.75V316H493V313.5H494.25V318H495.5V318H496.75V316H498V314H499.25V314H500.5V314H501.75V316H503V318H504.25V318H505.5V318H506.75V313.5H508V314H509.25V314H510.5V314H511.75V314H513V314H514.25V316H515.5V315.5H516.75V318H518V318H519.25V316H520.5V314H521.75V314H523V316H524.25V318H525.5V314H526.75V314H528V314H529.25V318.5H530.5V316H531.75V318H533V318H534.25V318H535.5V318H536.75V318H538V318H539.25V314H540.5V314H541.75V314H543V316H544.25V318H545.5V316H546V326H546.5V274H547.5V218H549V238H551V232H552.25V234H553.5V232H554.75V230H556V230H557.25V232H558.5V236.5H559.75V232H561V230H562.25V230H563.5V232H564.75V234H566V234H567.25V232H568.5V232H569.75V234H571V234H572.25V234H573.5V234H574.75V232.5H576V232.5H577.25V230H578.5V234H579.75V234H581V234H582.25V232H583.5V230H584.75V230H586V230H587.25V230H588.5V230H589.75V232H591V234H592.25V232H593.5V230H594.75V230H596V230H597.25V230H598.5V234H599.75V234H601V232H602.25V230H603.5V230H604.75V234H606V234H607.25V234H608.5V234H609.75V234H611V227.5H612.25V230H613.5V230H614.75V230H616V230H617.25V232H618.5V234H619.75V234H621V234H622.25V234H623.5V232H624.75V230H626V232H627.25V234H628.5V234H629.75V234H631V232H632.25V230H633.5V230H634.75V230H636V230H637.25V230H638.5V234H639.75V234H641V234H642.25V236.5H643.5V234H644.75V234H646V232H647.25V230H648.5V230H649.75V230H651V232H652.25V234H653.5V234H654.75V232H656V230H657.25V230H658.5V230H659.75V230H661V230H662.25V234.5H663.5V234H664.75V232H666V230H667.25V230H668.5V234H669.75V234H671V234H672.25V234H673.5V231.5H674.75V232H676V230H677.25V230H678.5V230H679.75V234H681V234H682.25V232H683.5V230H684.75V234H686V234H687.25V234H688.5V230H689.75V232H691V234H692.25V234H693.5V234H694.75V234H696V234H697.25V232H698.5V230H699.75V230H701V232H702.25V234H703.5V234H704.75V230H706V230H707.25V230H708.5V230H709.75V230H711V230H712.25V234H713.5V227.5H714.75V230H716V230H717.25V232H718.5V234H719.75V234H721V230H722.25V230H723.5V230H724.75V230H726V236.5H727.25V234H728.5V234H729.75V234H731V234H732.25V230H733.5V230H734.75V230H736V230H737.25V234H738.5V234H739.75V234H741V234H742.25V234H743.5V232H744.75V230H746V234H747.25V232H748.5V230H749.75V232H751V234H752.25V234H753.5V234H754.75V234H756V234H757.25V232H758.5V230H759.75V230H761V232H762.25V234H763.5V234H764.75V230H765.5V237H766V220H768V276H768.5V329H770.5V312H772V324H774" stroke="#b08a08" stroke-width="1" fill="none" transform="translate(0.5,0.5)"/>
<path d="M39 168.5h1M54 168.5h1M69 168.5h1M84 168.5h1M99 168.5h1M114 168.5h1M129 168.5h1M144 168.5h1M159 168.5h1M174 168.5h1M189 168.5h1M204 168.5h1M219 168.5h1M234 168.5h1M249 168.5h1M264 168.5h1M279 168.5h1M294 168.5h1M309 168.5h1M324 168.5h1M339 168.5h1M354 168.5h1M369 168.5h1M384 168.5h1M399 168.5h1M414 168.5h1M429 168.5h1M444 168.5h1M459 168.5h1M474 168.5h1M489 168.5h1M504 168.5h1M519 168.5h1M534 168.5h1M549 168.5h1M564 168.5h1M579 168.5h1M594 168.5h1M609 168.5h1M624 168.5h1M639 168.5h1M654 168.5h1M669 168.5h1M684 168.5h1M699 168.5h1M714 168.5h1M729 168.5h1M744 168.5h1M759 168.5h1M39 218.5h1M54 218.5h1M69 218.5h1M84 218.5h1M99 218.5h1M114 218.5h1M129 218.5h1M144 218.5h1M159 218.5h1M174 218.5h1M189 218.5h1M204 218.5h1M219 218.5h1M234 218.5h1M249 218.5h1M264 218.5h1M279 218.5h1M294 218.5h1M309 218.5h1M324 218.5h1M339 218.5h1M354 218.5h1M369 218.5h1M384 218.5h1M399 218.5h1M414 218.5h1M429 218.5h1M444 218.5h1M459 218.5h1M474 218.5h1M489 218.5h1M504 218.5h1M519 218.5h1M534 218.5h1M549 218.5h1M564 218.5h1M579 218.5h1M594 218.5h1M609 218.5h1M624 218.5h1M639 218.5h1M654 218.5h1M669 218.5h1M684 218.5h1M699 218.5h1M714 218.5h1M729 218.5h1M744 218.5h1M759 218.5h1M39 268.5h1M54 268.5h1M69 268.5h1M84 268.5h1M99 268.5h1M114 268.5h1M129 268.5h1M144 268.5h1M159 268.5h1M174 268.5h1M189 268.5h1M204 268.5h1M219 268.5h1M234 268.5h1M249 268.5h1M264 268.5h1M279 268.5h1M294 268.5h1M309 268.5h1M324 268.5h1M339 268.5h1M354 268.5h1M369 268.5h1M384 268.5h1M399 268.5h1M414 268.5h1M429 268.5h1M444 268.5h1M459 268.5h1M474 268.5h1M489 268.5h1M504 268.5h1M519 268.5h1M534 268.5h1M549 268.5h1M564 268.5h1M579 268.5h1M594 268.5h1M609 268.5h1M624 268.5h1M639 268.5h1M654 268.5h1M669 268.5h1M684 268.5h1M699 268.5h1M714 268.5h1M729 268.5h1M744 268.5h1M759 268.5h1M39 368.5h1M54 368.5h1M69 368.5h1M84 368.5h1M99 368.5h1M114 368.5h1M129 368.5h1M144 368.5h1M159 368.5h1M174 368.5h1M189 368.5h1M204 368.5h1M219 368.5h1M234 368.5h1M249 368.5h1M264 368.5h1M279 368.5h1M294 368.5h1M309 368.5h1M324 368.5h1M339 368.5h1M354 368.5h1M369 368.5h1M384 368.5h1M399 368.5h1M414 368.5h1M429 368.5h1M444 368.5h1M459 368.5h1M474 368.5h1M489 368.5h1M504 368.5h1M519 368.5h1M534 368.5h1M549 368.5h1M564 368.5h1M579 368.5h1M594 368.5h1M609 368.5h1M624 368.5h1M639 368.5h1M654 368.5h1M669 368.5h1M684 368.5h1M699 368.5h1M714 368.5h1M729 368.5h1M744 368.5h1M759 368.5h1M39 418.5h1M54 418.5h1M69 418.5h1M84 418.5h1M99 418.5h1M114 418.5h1M129 418.5h1M144 418.5h1M159 418.5h1M174 418.5h1M189 418.5h1M204 418.5h1M219 418.5h1M234 418.5h1M249 418.5h1M264 418.5h1M279 418.5h1M294 418.5h1M309 418.5h1M324 418.5h1M339 418.5h1M354 418.5h1M369 418.5h1M384 418.5h1M399 418.5h1M414 418.5h1M429 418.5h1M444 418.5h1M459 418.5h1M474 418.5h1M489 418.5h1M504 418.5h1M519 418.5h1M534 418.5h1M549 418.5h1M564 418.5h1M579 418.5h1M594 418.5h1M609 418.5h1M624 418.5h1M639 418.5h1M654 418.5h1M669 418.5h1M684 418.5h1M699 418.5h1M714 418.5h1M729 418.5h1M744 418.5h1M759 418.5h1M39 468.5h1M54 468.5h1M69 468.5h1M84 468.5h1M99 468.5h1M114 468.5h1M129 468.5h1M144 468.5h1M159 468.5h1M174 468.5h1M189 468.5h1M204 468.5h1M219 468.5h1M234 468.5h1M249 468.5h1M264 468.5h1M279 468.5h1M294 468.5h1M309 468.5h1M324 468.5h1M339 468.5h1M354 468.5h1M369 468.5h1M384 468.5h1M399 468.5h1M414 468.5h1M429 468.5h1M444 468.5h1M459 468.5h1M474 468.5h1M489 468.5h1M504 468.5h1M519 468.5h1M534 468.5h1M549 468.5h1M564 468.5h1M579 468.5h1M594 468.5h1M609 468.5h1M624 468.5h1M639 468.5h1M654 468.5h1M669 468.5h1M684 468.5h1M699 468.5h1M714 468.5h1M729 468.5h1M744 468.5h1M759 468.5h1M99 128.5h1M99 138.5h1M99 148.5h1M99 158.5h1M99 178.5h1M99 188.5h1M99 198.5h1M99 208.5h1M99 228.5h1M99 238.5h1M99 248.5h1M99 258.5h1M99 278.5h1M99 288.5h1M99 298.5h1M99 308.5h1M99 328.5h1M99 338.5h1M99 348.5h1M99 358.5h1M99 378.5h1M99 388.5h1M99 398.5h1M99 408.5h1M99 428.5h1M99 438.5h1M99 448.5h1M99 458.5h1M99 478.5h1M99 488.5h1M99 498.5h1M99 508.5h1M174 128.5h1M174 138.5h1M174 148.5h1M174 158.5h1M174 178.5h1M174 188.5h1M174 198.5h1M174 208.5h1M174 228.5h1M174 238.5h1M174 248.5h1M174 258.5h1M174 278.5h1M174 288.5h1M174 298.5h1M174 308.5h1M174 328.5h1M174 338.5h1M174 348.5h1M174 358.5h1M174 378.5h1M174 388.5h1M174 398.5h1M174 408.5h1M174 428.5h1M174 438.5h1M174 448.5h1M174 458.5h1M174 478.5h1M174 488.5h1M174 498.5h1M174 508.5h1M249 128.5h1M249 138.5h1M249 148.5h1M249 158.5h1M249 178.5h1M249 188.5h1M249 198.5h1M249 208.5h1M249 228.5h1M249 238.5h1M249 248.5h1M249 258.5h1M249 278.5h1M249 288.5h1M249 298.5h1M249 308.5h1M249 328.5h1M249 338.5h1M249 348.5h1M249 358.5h1M249 378.5h1M249 388.5h1M249 398.5h1M249 408.5h1M249 428.5h1M249 438.5h1M249 448.5h1M249 458.5h1M249 478.5h1M249 488.5h1M249 498.5h1M249 508.5h1M324 128.5h1M324 138.5h1M324 148.5h1M324 158.5h1M324 178.5h1M324 188.5h1M324 198.5h1M324 208.5h1M324 228.5h1M324 238.5h1M324 248.5h1M324 258.5h1M324 278.5h1M324 288.5h1M324 298.5h1M324 308.5h1M324 328.5h1M324 338.5h1M324 348.5h1M324 358.5h1M324 378.5h1M324 388.5h1M324 398.5h1M324 408.5h1M324 428.5h1M324 438.5h1M324 448.5h1M324 458.5h1M324 478.5h1M324 488.5h1M324 498.5h1M324 508.5h1M474 128.5h1M474 138.5h1M474 148.5h1M474 158.5h1M474 178.5h1M474 188.5h1M474 198.5h1M474 208.5h1M474 228.5h1M474 238.5h1M474 248.5h1M474 258.5h1M474 278.5h1M474 288.5h1M474 298.5h1M474 308.5h1M474 328.5h1M474 338.5h1M474 348.5h1M474 358.5h1M474 378.5h1M474 388.5h1M474 398.5h1M474 408.5h1M474 428.5h1M474 438.5h1M474 448.5h1M474 458.5h1M474 478.5h1M474 488.5h1M474 498.5h1M474 508.5h1M549 128.5h1M549 138.5h1M549 148.5h1M549 158.5h1M549 178.5h1M549 188.5h1M549 198.5h1M549 208.5h1M549 228.5h1M549 238.5h1M549 248.5h1M549 258.5h1M549 278.5h1M549 288.5h1M549 298.5h1M549 308.5h1M549 328.5h1M549 338.5h1M549 348.5h1M549 358.5h1M549 378.5h1M549 388.5h1M549 398.5h1M549 408.5h1M549 428.5h1M549 438.5h1M549 448.5h1M549 458.5h1M549 478.5h1M549 488.5h1M549 498.5h1M549 508.5h1M624 128.5h1M624 138.5h1M624 148.5h1M624 158.5h1M624 178.5h1M624 188.5h1M624 198.5h1M624 208.5h1M624 228.5h1M624 238.5h1M624 248.5h1M624 258.5h1M624 278.5h1M624 288.5h1M624 298.5h1M624 308.5h1M624 328.5h1M624 338.5h1M624 348.5h1M624 358.5h1M624 378.5h1M624 388.5h1M624 398.5h1M624 408.5h1M624 428.5h1M624 438.5h1M624 448.5h1M624 458.5h1M624 478.5h1M624 488.5h1M624 498.5h1M624 508.5h1M699 128.5h1M699 138.5h1M699 148.5h1M699 158.5h1M699 178.5h1M699 188.5h1M699 198.5h1M699 208.5h1M699 228.5h1M699 238.5h1M699 248.5h1M699 258.5h1M699 278.5h1M699 288.5h1M699 298.5h1M699 308.5h1M699 328.5h1M699 338.5h1M699 348.5h1M699 358.5h1M699 378.5h1M699 388.5h1M699 398.5h1M699 408.5h1M699 428.5h1M699 438.5h1M699 448.5h1M699 458.5h1M699 478.5h1M699 488.5h1M699 498.5h1M699 508.5h1M39 318.5h1M39 317.5h1M39 319.5h1M54 318.5h1M54 317.5h1M54 319.5h1M69 318.5h1M69 317.5h1M69 319.5h1M84 318.5h1M84 317.5h1M84 319.5h1M99 318.5h1M99 317.5h1M99 319.5h1M114 318.5h1M114 317.5h1M114 319.5h1M129 318.5h1M129 317.5h1M129 319.5h1M144 318.5h1M144 317.5h1M144 319.5h1M159 318.5h1M159 317.5h1M159 319.5h1M174 318.5h1M174 317.5h1M174 319.5h1M189 318.5h1M189 317.5h1M189 319.5h1M204 318.5h1M204 317.5h1M204 319.5h1M219 318.5h1M219 317.5h1M219 319.5h1M234 318.5h1M234 317.5h1M234 319.5h1M249 318.5h1M249 317.5h1M249 319.5h1M264 318.5h1M264 317.5h1M264 319.5h1M279 318.5h1M279 317.5h1M279 319.5h1M294 318.5h1M294 317.5h1M294 319.5h1M309 318.5h1M309 317.5h1M309 319.5h1M324 318.5h1M324 317.5h1M324 319.5h1M339 318.5h1M339 317.5h1M339 319.5h1M354 318.5h1M354 317.5h1M354 319.5h1M369 318.5h1M369 317.5h1M369 319.5h1M384 318.5h1M384 317.5h1M384 319.5h1M399 318.5h1M399 317.5h1M399 319.5h1M414 318.5h1M414 317.5h1M414 319.5h1M429 318.5h1M429 317.5h1M429 319.5h1M444 318.5h1M444 317.5h1M444 319.5h1M459 318.5h1M459 317.5h1M459 319.5h1M474 318.5h1M474 317.5h1M474 319.5h1M489 318.5h1M489 317.5h1M489 319.5h1M504 318.5h1M504 317.5h1M504 319.5h1M519 318.5h1M519 317.5h1M519 319.5h1M534 318.5h1M534 317.5h1M534 319.5h1M549 318.5h1M549 317.5h1M549 319.5h1M564 318.5h1M564 317.5h1M564 319.5h1M579 318.5h1M579 317.5h1M579 319.5h1M594 318.5h1M594 317.5h1M594 319.5h1M609 318.5h1M609 317.5h1M609 319.5h1M624 318.5h1M624 317.5h1M624 319.5h1M639 318.5h1M639 317.5h1M639 319.5h1M654 318.5h1M654 317.5h1M654 319.5h1M669 318.5h1M669 317.5h1M669 319.5h1M684 318.5h1M684 317.5h1M684 319.5h1M699 318.5h1M699 317.5h1M699 319.5h1M714 318.5h1M714 317.5h1M714 319.5h1M729 318.5h1M729 317.5h1M729 319.5h1M744 318.5h1M744 317.5h1M744 319.5h1M759 318.5h1M759 317.5h1M759 319.5h1M398 128.5h3M398 138.5h3M398 148.5h3M398 158.5h3M398 168.5h3M398 178.5h3M398 188.5h3M398 198.5h3M398 208.5h3M398 218.5h3M398 228.5h3M398 238.5h3M398 248.5h3M398 258.5h3M398 268.5h3M398 278.5h3M398 288.5h3M398 298.5h3M398 308.5h3M398 318.5h3M398 328.5h3M398 338.5h3M398 348.5h3M398 358.5h3M398 368.5h3M398 378.5h3M398 388.5h3M398 398.5h3M398 408.5h3M398 418.5h3M398 428.5h3M398 438.5h3M398 448.5h3M398 458.5h3M398 468.5h3M398 478.5h3M398 488.5h3M398 498.5h3M398 508.5h3M39 120.5h1M39 121.5h1M54 120.5h1M54 121.5h1M69 120.5h1M69 121.5h1M84 120.5h1M84 121.5h1M99 120.5h1M99 121.5h1M99 122.5h1M99 123.5h1M114 120.5h1M114 121.5h1M129 120.5h1M129 121.5h1M144 120.5h1M144 121.5h1M159 120.5h1M159 121.5h1M174 120.5h1M174 121.5h1M174 122.5h1M174 123.5h1M189 120.5h1M189 121.5h1M204 120.5h1M204 121.5h1M219 120.5h1M219 121.5h1M234 120.5h1M234 121.5h1M249 120.5h1M249 121.5h1M249 122.5h1M249 123.5h1M264 120.5h1M264 121.5h1M279 120.5h1M279 121.5h1M294 120.5h1M294 121.5h1M309 120.5h1M309 121.5h1M324 120.5h1M324 121.5h1M324 122.5h1M324 123.5h1M339 120.5h1M339 121.5h1M354 120.5h1M354 121.5h1M369 120.5h1M369 121.5h1M384 120.5h1M384 121.5h1M399 120.5h1M399 121.5h1M399 122.5h1M399 123.5h1M414 120.5h1M414 121.5h1M429 120.5h1M429 121.5h1M444 120.5h1M444 121.5h1M459 120.5h1M459 121.5h1M474 120.5h1M474 121.5h1M474 122.5h1M474 123.5h1M489 120.5h1M489 121.5h1M504 120.5h1M504 121.5h1M519 120.5h1M519 121.5h1M534 120.5h1M534 121.5h1M549 120.5h1M549 121.5h1M549 122.5h1M549 123.5h1M564 120.5h1M564 121.5h1M579 120.5h1M579 121.5h1M594 120.5h1M594 121.5h1M609 120.5h1M609 121.5h1M624 120.5h1M624 121.5h1M624 122.5h1M624 123.5h1M639 120.5h1M639 121.5h1M654 120.5h1M654 121.5h1M669 120.5h1M669 121.5h1M684 120.5h1M684 121.5h1M699 120.5h1M699 121.5h1M699 122.5h1M699 123.5h1M714 120.5h1M714 121.5h1M729 120.5h1M729 121.5h1M744 120.5h1M744 121.5h1M759 120.5h1M759 121.5h1M25 128.5h2M772 128.5h2M25 138.5h2M772 138.5h2M25 148.5h2M772 148.5h2M25 158.5h2M772 158.5h2M25 168.5h4M770 168.5h4M25 178.5h2M772 178.5h2M25 188.5h2M772 188.5h2M25 198.5h2M772 198.5h2M25 208.5h2M772 208.5h2M25 218.5h4M770 218.5h4M25 228.5h2M772 228.5h2M25 238.5h2M772 238.5h2M25 248.5h2M772 248.5h2M25 258.5h2M772 258.5h2M25 268.5h4M770 268.5h4M25 278.5h2M772 278.5h2M25 288.5h2M772 288.5h2M25 298.5h2M772 298.5h2M25 308.5h2M772 308.5h2M25 318.5h4M770 318.5h4M25 328.5h2M772 328.5h2M25 338.5h2M772 338.5h2M25 348.5h2M772 348.5h2M25 358.5h2M772 358.5h2M25 368.5h4M770 368.5h4M25 378.5h2M772 378.5h2M25 388.5h2M772 388.5h2M25 398.5h2M772 398.5h2M25 408.5h2M772 408.5h2M25 418.5h4M770 418.5h4M25 428.5h2M772 428.5h2M25 438.5h2M772 438.5h2M25 448.5h2M772 448.5h2M25 458.5h2M772 458.5h2M25 468.5h4M770 468.5h4M25 478.5h2M772 478.5h2M25 488.5h2M772 488.5h2M25 498.5h2M772 498.5h2M25 508.5h2M772 508.5h2" stroke="#c4c4c4" stroke-width="1" fill="none"/>
<polygon points="58.5,120 72.5,120 65.5,127.5" fill="#ffd200" shape-rendering="auto"/>
<polygon points="392.5,120 406.5,120 399.5,127.5" fill="#10f828" shape-rendering="auto"/>
<polygon points="766.5,304.5 774,298 774,311" fill="#ffd200" shape-rendering="auto"/>
<polygon points="3.5,36.5 19.5,36.5 22.5,42.5 19.5,48.5 3.5,48.5" fill="#00ffff" stroke="#000" stroke-width="1" shape-rendering="auto"/>
<polygon points="3.5,60.5 19.5,60.5 22.5,66.5 19.5,72.5 3.5,72.5" fill="#02438a" stroke="#ffd200" stroke-width="1" shape-rendering="auto"/>
<polygon points="3.5,212.5 19.5,212.5 22.5,218.5 19.5,224.5 3.5,224.5" fill="#00ffff" stroke="#000" stroke-width="1" shape-rendering="auto"/>
<polygon points="3.5,308.5 19.5,308.5 22.5,314.5 19.5,320.5 3.5,320.5" fill="#02438a" stroke="#ffd200" stroke-width="1" shape-rendering="auto"/>
</svg>
<div class="a logo"><span class="g">G</span><span class="w">W</span><span class="r">INSTEK</span><span class="bar"></span></div>
<div class="a m" style="left:381px;top:1px;color:#fff">M 500us</div>
<svg class="a" style="left:680px;top:0" width="100" height="18"><rect x="3.5" y="-0.5" width="49" height="16.5" rx="6.5" fill="none" stroke="#e6fa1e" stroke-width="1.3"/><rect x="57.5" y="-0.5" width="37" height="16.5" rx="6.5" fill="none" stroke="#64fa96" stroke-width="1.3"/><g shape-rendering="crispEdges" stroke="#64fa96" fill="none"><path d="M64 15H68V4H83V15H87" stroke-width="2"/><path d="M69 2.5h2M73 2.5h2M77 2.5h2M81 2.5h2" stroke-width="1"/></g></svg>
<div class="a" style="left:683px;top:0;width:50px;color:#e6fa1e;font-weight:bold;font-size:14px;line-height:16px;text-align:center">Auto</div>
<div class="a tagn thin" style="left:4px;top:36px;color:#000">2</div>
<div class="a tagn" style="left:4px;top:60px;color:#ffd200">1</div>
<div class="a tagn thin" style="left:4px;top:212px;color:#000">2</div>
<div class="a tagn" style="left:4px;top:308px;color:#ffd200">1</div>
<div class="a box" style="left:643px;top:458px;width:131px;height:20px;border-radius:4px"></div>
<div class="a" style="left:645px;top:460px;width:23px;height:15px;border-radius:7px;background:#fff;color:#000;font-weight:bold;font-size:14px;line-height:15px;text-align:center">F</div>
<div class="a" style="left:705px;top:459px;color:#fff;font-size:14px;line-height:17px">&lt;2Hz</div>
<div class="a box" style="left:26px;top:479px;width:748px;height:39px;border-radius:4px"></div>
<div class="a circ" style="left:29px;top:482px;background:#ffd200">1</div>
<div class="a m" style="left:45px;top:481px;margin-left:-0.5px;color:#ffd200;white-space:pre">RMS  2.31V</div>
<div class="a circ" style="left:215px;top:482px;background:#ffd200">1</div>
<div class="a m" style="left:231px;top:481px;margin-left:-0.5px;color:#ffd200;white-space:pre">Amplitude  3.36V</div>
<div class="a circ" style="left:401px;top:482px;background:#ffd200">1</div>
<div class="a m" style="left:417px;top:481px;margin-left:-0.5px;color:#ffd200;white-space:pre">Period  58.79us</div>
<div class="a box" style="left:1px;top:521px;width:420px;height:21px;border-radius:6px"></div>
<div class="a circ" style="left:3px;top:524px;background:#ffd200">1</div>
<svg class="a" style="left:30px;top:528px" width="14" height="5" shape-rendering="crispEdges"><path d="M0 1H14M0 4H4M5 4H9M10 4H14" stroke="#ffd200" stroke-width="2" fill="none"/></svg>
<div class="a m m2" style="left:66px;top:524px;color:#ffd200">2V</div>
<div class="a circ thin" style="left:110px;top:524px;background:#00ffff">2</div>
<svg class="a" style="left:137px;top:528px" width="14" height="5" shape-rendering="crispEdges"><path d="M0 1H14M0 4H4M5 4H9M10 4H14" stroke="#00ffff" stroke-width="2" fill="none"/></svg>
<div class="a m m2" style="left:174px;top:524px;color:#00ffff">1V</div>
<div class="a circ thin" style="left:217px;top:524px;background:#404040">3</div>
<svg class="a" style="left:244px;top:528px" width="14" height="5" shape-rendering="crispEdges"><path d="M0 1H14M0 4H4M5 4H9M10 4H14" stroke="#404040" stroke-width="2" fill="none"/></svg>
<div class="a m m2" style="left:268px;top:524px;color:#404040">100mV</div>
<div class="a circ thin" style="left:324px;top:524px;background:#404040">4</div>
<svg class="a" style="left:351px;top:528px" width="14" height="5" shape-rendering="crispEdges"><path d="M0 1H14M0 4H4M5 4H9M10 4H14" stroke="#404040" stroke-width="2" fill="none"/></svg>
<div class="a m m2" style="left:376px;top:524px;color:#404040">100mV</div>
<div class="a box" style="left:425px;top:521px;width:169px;height:21px;border-radius:6px"></div>
<div class="a" style="left:431px;top:524px;width:13px;height:14px;background:#fff;color:#000;font-weight:bold;font-size:13px;line-height:14px;text-align:center">Z</div>
<div class="a m m2" style="left:455px;top:524px;color:#fff">10us</div>
<div class="a" style="left:499px;top:524px;width:14px;height:14px;border-radius:3px;background:#fff;color:#000;font-weight:bold;font-size:13px;line-height:14px;text-align:center">H</div>
<div class="a m m2" style="left:527px;top:524px;color:#fff">44.60us</div>
<div class="a box" style="left:599px;top:521px;width:176px;height:39px;border-radius:4px"></div>
<div class="a circ" style="left:622px;top:524px;background:#ffd200">1</div>
<svg class="a" style="left:653px;top:524px" width="12" height="14" shape-rendering="crispEdges"><path d="M1 12.5H5.5V1.5H10" stroke="#ffd200" stroke-width="1" fill="none"/><path d="M3 8L5.5 4L8 8" stroke="#ffd200" stroke-width="1" fill="none" shape-rendering="auto"/></svg>
<div class="a m m2" style="left:681px;top:524px;color:#ffd200">448mV</div>
<div class="a btn" style="left:16px;width:110px"><i></i></div>
<div class="a btn" style="left:128px;width:110px"><i></i></div>
<div class="a btn" style="left:240px;width:110px"><i></i></div>
<div class="a btn" style="left:352px;width:110px"><i></i></div>
<svg class="a" style="left:47px;top:556px" width="64" height="30"><g stroke="#201614" fill="none"><path d="M2 14.5H17M47 14.5H61" stroke-width="1.4"/><path d="M1 14.5L4.5 11.5V17.5ZM62 14.5L58.5 11.5V17.5Z" fill="#201614" stroke="none"/><path d="M27 2H21V27H27M36 2H42V27H36" stroke-width="2" shape-rendering="crispEdges"/></g></svg>
<svg class="a" style="left:24px;top:562px" width="21" height="21"><circle cx="9.9" cy="9.9" r="10.1" fill="#c8f8fc"/><path d="M12.6 4.3A6 6 0 1 1 5 10.3" stroke="#181414" stroke-width="2" fill="none"/><path d="M0 9.8L5.5 3.8L11 9.8Z" fill="#181414"/></svg>
<svg class="a" style="left:148px;top:548px" width="70" height="24"><g stroke="#201614" fill="none"><path d="M2 12.5H18M52 12.5H68" stroke-width="1.4"/><path d="M1 12.5L4.5 9.5V15.5ZM69 12.5L65.5 9.5V15.5Z" fill="#201614" stroke="none"/><path d="M29 2H24V22H29M41 2H46V22H41" stroke-width="2" shape-rendering="crispEdges"/></g></svg>
<div class="a" style="left:131px;top:572px;width:52px;height:21px;border-radius:4px;background:#c8fafe"></div>
<div class="a bt2" style="left:130.56px;top:571.51px;font-size:17px;line-height:18.99px;transform:scaleX(0.8869)">Плавно</div>
<div class="a bt2" style="left:190.82px;top:571.51px;font-size:17px;line-height:18.99px;transform:scaleX(0.9817)">Грубо</div>
<div class="a bt2" style="left:269.08px;top:543.62px;font-size:15px;line-height:16.75px;transform:scaleX(1.1549)">Сброс</div>
<div class="a bt2" style="left:249.21px;top:559.71px;font-size:18px;line-height:20.11px;transform:scaleX(0.9911)">положения</div>
<div class="a" style="left:242px;top:578px;width:106px;height:20px;overflow:hidden"><div class="a bt2" style="left:-0.41px;top:-1.09px;font-size:18px;line-height:20.11px;transform:scaleX(0.9300)">растяжкина<span style="font-size:15.5px">0</span>с</div></div>
<div class="a bt2" style="left:363.06px;top:543.62px;font-size:15px;line-height:16.75px;transform:scaleX(1.1694)">Сброс Гор.</div>
<div class="a bt2" style="left:361.72px;top:559.71px;font-size:18px;line-height:20.11px;transform:scaleX(0.9855)">положения</div>
<div class="a bt2" style="left:383.96px;top:578.27px;font-size:15.5px;line-height:17.31px;transform:scaleX(1.0437)">на 0 с</div>
</body></html>
